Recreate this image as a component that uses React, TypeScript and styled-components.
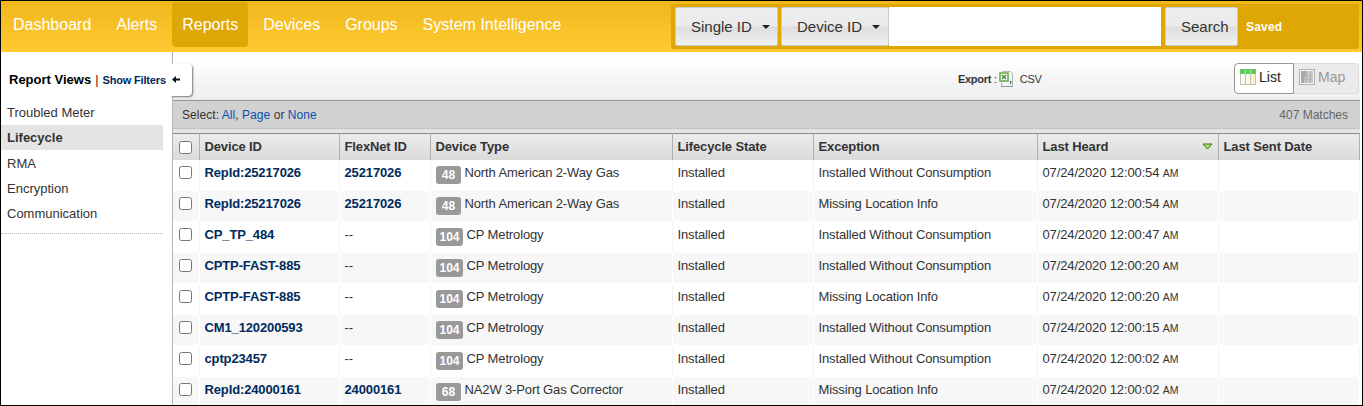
import React from "react";
import styled, { createGlobalStyle, css } from "styled-components";

const Global = createGlobalStyle`
  *, *::before, *::after { box-sizing: border-box; }
  body { margin: 0; font-family: "Liberation Sans", Arial, sans-serif; font-size: 13px; color: #333; background: #fff; }
`;

const Frame = styled.div`
  display: flex;
  flex-direction: column;
  width: 1363px;
  height: 406px;
  border: 1px solid #000;
  overflow: hidden;
  background: #fff;
`;

const TopBar = styled.header`
  display: flex;
  justify-content: space-between;
  flex: none;
  height: 51px;
  padding: 1px 3px 0 2px;
  background: linear-gradient(#f0b71d, #ffca32);
`;

const Nav = styled.nav`
  display: flex;
  gap: 5px;
`;

const NavItem = styled.a<{ $active?: boolean }>`
  height: 45px;
  padding: 0 10px;
  border-radius: 4px;
  font-size: 16px;
  line-height: 46px;
  color: #fff;
  white-space: nowrap;
  background: ${(p) => (p.$active ? "#dfa703" : "transparent")};
`;

const SearchPanel = styled.div`
  display: flex;
  width: 688px;
  height: 45px;
  margin-top: 2px;
  padding: 3px 4px;
  border-radius: 3px;
  background: #dfa703;
`;

const BarButton = styled.button<{ $width: number; $after?: number }>`
  display: flex;
  align-items: center;
  flex: none;
  width: ${(p) => p.$width}px;
  height: 39px;
  margin: 0 ${(p) => p.$after ?? 0}px 0 0;
  padding: 0 0 0 15px;
  border: 1px solid #ccc;
  border-radius: 2px;
  font: 15px "Liberation Sans", Arial, sans-serif;
  color: #333;
  white-space: nowrap;
  background: linear-gradient(#ededed 0%, #ebebeb 48%, #dedede 52%, #f0f0f0 100%);
`;

const Caret = styled.span`
  margin-left: 10px;
  border: 4px solid transparent;
  border-top-color: #222;
  border-bottom: 0;
`;

const SearchInput = styled.input`
  width: 272px;
  height: 39px;
  margin: 0 4px 0 0;
  padding: 0 8px;
  border: 0;
  background: #fff;
`;

const Saved = styled.a`
  margin-left: 8px;
  font-size: 12px;
  font-weight: 700;
  letter-spacing: 0.2px;
  line-height: 41px;
  color: #fff;
`;

const Body = styled.div`
  display: flex;
  flex: 1;
  min-height: 0;
`;

const Sidebar = styled.aside`
  flex: none;
  width: 171px;
`;

const SideHead = styled.div`
  display: flex;
  align-items: center;
  height: 48px;
  padding: 7px 0 0 8px;
  white-space: nowrap;
`;

const SideTitle = styled.strong`
  font-size: 13px;
  color: #000;
`;

const Divider = styled.span`
  margin: 0 4px 0 4px;
  color: #800;
`;

const FilterLink = styled.a`
  font-size: 11px;
  font-weight: 700;
  letter-spacing: -0.17px;
  color: #002a5c;
`;

const ViewList = styled.ul`
  width: 162px;
  margin: 0;
  padding: 0 0 7px;
  list-style: none;
  border-bottom: 1px dotted #bbb;
`;

const ViewItem = styled.li<{ $active?: boolean }>`
  height: 25px;
  padding-left: 6px;
  line-height: 25px;
  ${(p) =>
    p.$active &&
    css`
      margin-bottom: 1px;
      font-weight: 700;
      background: #e4e4e4;
    `}
`;

const Main = styled.main`
  display: flex;
  flex-direction: column;
  flex: none;
  width: 1188px;
  border-left: 1px solid #b5b5b5;
`;

const Toolbar = styled.div`
  position: relative;
  display: flex;
  align-items: center;
  flex: none;
  height: 48px;
  padding: 5px 1px 0 0;
  border-bottom: 1px solid #e4e4e4;
  background: linear-gradient(#fff 15%, #f2f2f2 75%);
`;

const CollapseTab = styled.button`
  position: absolute;
  left: -2px;
  top: 12px;
  width: 21px;
  height: 32px;
  padding: 0;
  border: 0;
  border-radius: 0 4px 4px 0;
  background: #fff;
  box-shadow: 1px 1px 2px #777;
  clip-path: inset(-1px -4px -4px 0);
  svg { position: absolute; left: 1px; top: 12px; }
`;

const Export = styled.div`
  display: flex;
  align-items: center;
  margin: 2px 0 0 785px;
  font-size: 11px;
  letter-spacing: -0.3px;
  white-space: nowrap;
  svg { margin: 0 5px 0 2px; }
`;

const ExportLabel = styled.strong`
  margin-right: 3px;
`;

const Toggle = styled.div`
  display: flex;
  margin-left: auto;
`;

const ToggleButton = styled.button<{ $on?: boolean }>`
  display: flex;
  align-items: center;
  gap: 3px;
  height: 31px;
  padding: 0 0 2px 5px;
  font: 14px "Liberation Sans", Arial, sans-serif;
  ${(p) =>
    p.$on
      ? css`
          width: 60px;
          border: 1px solid #999;
          border-radius: 4px 0 0 4px;
          color: #222;
          background: #fff;
        `
      : css`
          width: 65px;
          border: 1px solid #ddd;
          border-left: 0;
          border-radius: 0 4px 4px 0;
          color: #999;
          background: #ebebeb;
        `}
`;

const SelectBar = styled.div`
  display: flex;
  justify-content: space-between;
  flex: none;
  height: 29px;
  padding: 0 12px 0 9px;
  border-top: 1px solid #999;
  border-bottom: 1px solid #c3c3c3;
  line-height: 28px;
  font-size: 12px;
  background: #d1d1d1;
  a { color: #0b50b0; }
`;

const Choices = styled.span`
  letter-spacing: 0.05px;
`;

const Matches = styled.span`
  color: #666;
`;

const Grid = styled.table`
  width: 1187px;
  border-collapse: separate;
  border-spacing: 0;
  table-layout: fixed;
  border-top: 4px solid #e3e3e3;
  letter-spacing: -0.13px;
`;

const Th = styled.th`
  height: 27px;
  padding: 0 0 1px 4.5px;
  border-top: 1px solid #8a8a8a;
  border-right: 1px solid #b0b0b0;
  text-align: left;
  white-space: nowrap;
  background: linear-gradient(#ececec, #dadada);
`;

const SortHead = styled.span`
  display: flex;
  align-items: center;
  justify-content: space-between;
  padding-right: 5px;
`;

const Row = styled.tr<{ $shade: boolean }>`
  background: ${(p) => (p.$shade ? "#f7f7f7" : "#fff")};
  td { border-right: 1px solid ${(p) => (p.$shade ? "#fff" : "#f3f3f3")}; }
`;

const Td = styled.td`
  height: 31px;
  padding: 5px 0 0 4.5px;
  border-bottom: 1px solid #fff;
  vertical-align: top;
  line-height: 16px;
  white-space: nowrap;
`;

const IdLink = styled.a`
  font-weight: 700;
  color: #002a5c;
`;

const Badge = styled.span`
  display: inline-block;
  min-width: 25px;
  height: 18px;
  margin: 1px 3.5px 0 0.5px;
  padding: 0 3.5px;
  border-radius: 3px;
  font-size: 12px;
  font-weight: 700;
  letter-spacing: 0;
  line-height: 18px;
  text-align: center;
  vertical-align: top;
  color: #fff;
  background: #999;
`;

const Meridiem = styled.span`
  font-size: 10.5px;
`;

const Check = styled.input.attrs({ type: "checkbox" })`
  display: block;
  width: 13px;
  height: 13px;
  margin: 1px 0 0 1.5px;
`;

const ArrowIcon = () => (
  <svg width="9" height="7" viewBox="0 0 9 7">
    <path d="M0 3.5 4 0v2.5h4v2H4V7z" fill="#111" />
  </svg>
);

const ExcelIcon = () => (
  <svg width="16" height="16" viewBox="0 0 16 16">
    <path d="M3.5.5h8l2 2v13h-11z" fill="#f3f6f8" stroke="#a9bac4" />
    <path d="M2 15.5h12" stroke="#8a949a" />
    <path d="M11 10h1.5v2l-1.5 1.5z" fill="#667" />
    <rect x="1" y="2" width="8" height="8" fill="#fff" stroke="#6fae4e" strokeWidth="1.6" />
    <path d="m3 4 4 4m0-4-4 4" stroke="#4d8a3a" strokeWidth="1.5" />
  </svg>
);

const ListIcon = () => (
  <svg width="16" height="16" viewBox="0 0 16 16">
    <rect width="16" height="16" fill="#c4c4bc" />
    <rect x="1" y="5" width="4" height="10" fill="#fafaf4" />
    <rect x="6" y="5" width="4" height="10" fill="#fafae8" />
    <rect x="11" y="5" width="4" height="10" fill="#f6f4cc" />
    <path d="M0 0h16v5H0z" fill="#5fcb5f" />
    <path d="M5.5 1v4M10.5 1v4" stroke="#a7e6a7" />
  </svg>
);

const MapIcon = () => (
  <svg width="16" height="16" viewBox="0 0 16 16">
    <rect x=".5" y=".5" width="15" height="15" fill="#f8f8f8" stroke="#b0b0b0" />
    <rect x="2" y="2" width="12" height="12" fill="#c8c8c8" />
    <path d="M2 2h5v3l-2 6v3H2z" fill="#a8a8a8" />
    <path d="M5 6.5h9M5 10.5h9M7.5 2v12M11.5 2v12" stroke="#b4b4b4" />
  </svg>
);

const SortIcon = () => (
  <svg width="11" height="7" viewBox="0 0 11 7">
    <path d="M1 1h9L5.5 6z" fill="#a5e06a" stroke="#3d7412" />
  </svg>
);

const navItems = ["Dashboard", "Alerts", "Reports", "Devices", "Groups", "System Intelligence"];
const views = ["Troubled Meter", "Lifecycle", "RMA", "Encryption", "Communication"];
const columnWidths = [27, 140, 91, 242, 141, 224, 181, 141];
const headings = ["Device ID", "FlexNet ID", "Device Type", "Lifecycle State", "Exception"];

const GAS = "North American 2-Way Gas";
const CP = "CP Metrology";
const NO_USE = "Installed Without Consumption";
const NO_LOC = "Missing Location Info";

const rows: [string, string, number, string, string, string][] = [
  ["RepId:25217026", "25217026", 48, GAS, NO_USE, "12:00:54"],
  ["RepId:25217026", "25217026", 48, GAS, NO_LOC, "12:00:54"],
  ["CP_TP_484", "", 104, CP, NO_USE, "12:00:47"],
  ["CPTP-FAST-885", "", 104, CP, NO_USE, "12:00:20"],
  ["CPTP-FAST-885", "", 104, CP, NO_LOC, "12:00:20"],
  ["CM1_120200593", "", 104, CP, NO_USE, "12:00:15"],
  ["cptp23457", "", 104, CP, NO_USE, "12:00:02"],
  ["RepId:24000161", "24000161", 68, "NA2W 3-Port Gas Corrector", NO_LOC, "12:00:02"],
];

export default function App() {
  return (
    <Frame>
      <Global />
      <TopBar>
        <Nav>
          {navItems.map((n) => (
            <NavItem key={n} $active={n === "Reports"}>{n}</NavItem>
          ))}
        </Nav>
        <SearchPanel>
          <BarButton $width={103} $after={3}>Single ID<Caret /></BarButton>
          <BarButton $width={108}>Device ID<Caret /></BarButton>
          <SearchInput />
          <BarButton $width={73}>Search</BarButton>
          <Saved>Saved</Saved>
        </SearchPanel>
      </TopBar>
      <Body>
        <Sidebar>
          <SideHead>
            <SideTitle>Report Views</SideTitle>
            <Divider>|</Divider>
            <FilterLink>Show Filters</FilterLink>
          </SideHead>
          <ViewList>
            {views.map((v) => (
              <ViewItem key={v} $active={v === "Lifecycle"}>{v}</ViewItem>
            ))}
          </ViewList>
        </Sidebar>
        <Main>
          <Toolbar>
            <CollapseTab aria-label="Collapse"><ArrowIcon /></CollapseTab>
            <Export>
              <ExportLabel>Export</ExportLabel>:<ExcelIcon />CSV
            </Export>
            <Toggle>
              <ToggleButton $on><ListIcon />List</ToggleButton>
              <ToggleButton><MapIcon />Map</ToggleButton>
            </Toggle>
          </Toolbar>
          <SelectBar>
            <Choices>Select: <a>All</a>, <a>Page</a> or <a>None</a></Choices>
            <Matches>407 Matches</Matches>
          </SelectBar>
          <Grid>
            <colgroup>
              {columnWidths.map((w, i) => <col key={i} width={w} />)}
            </colgroup>
            <thead>
              <tr>
                <Th><Check /></Th>
                {headings.map((h) => <Th key={h}>{h}</Th>)}
                <Th><SortHead>Last Heard<SortIcon /></SortHead></Th>
                <Th>Last Sent Date</Th>
              </tr>
            </thead>
            <tbody>
              {rows.map(([id, flex, code, type, exception, time], i) => (
                <Row key={i} $shade={i % 2 === 1}>
                  <Td><Check /></Td>
                  <Td><IdLink>{id}</IdLink></Td>
                  <Td>{flex ? <IdLink>{flex}</IdLink> : "--"}</Td>
                  <Td><Badge>{code}</Badge>{type}</Td>
                  <Td>Installed</Td>
                  <Td>{exception}</Td>
                  <Td>07/24/2020 {time} <Meridiem>AM</Meridiem></Td>
                  <Td />
                </Row>
              ))}
            </tbody>
          </Grid>
        </Main>
      </Body>
    </Frame>
  );
}
